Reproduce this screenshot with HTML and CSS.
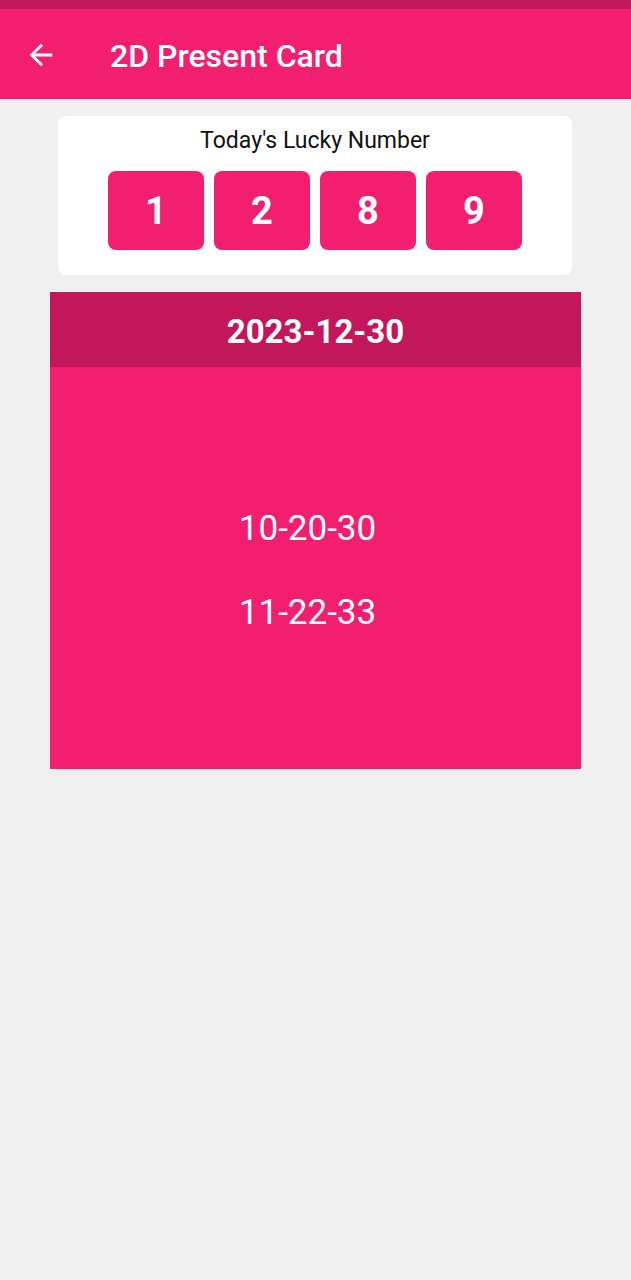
FILE: index.html
```html
<!DOCTYPE html>
<html>
<head>
<meta charset="utf-8">
<link rel="stylesheet" href="styles.css">
</head>
<body>
<div class="status"></div>
<header class="appbar">
  <svg class="back" width="34" height="34" viewBox="0 0 24 24"><path d="M20 11H7.83l5.59-5.59L12 4l-8 8 8 8 1.41-1.41L7.83 13H20v-2z" fill="#fff"/></svg>
  <h1 class="title">2D Present Card</h1>
</header>
<main class="content">
  <section class="lucky">
    <div class="lucky-title">Today's Lucky Number</div>
    <div class="digits">
      <div class="digit">1</div>
      <div class="digit">2</div>
      <div class="digit">8</div>
      <div class="digit">9</div>
    </div>
  </section>
  <section class="result">
    <div class="result-date">2023-12-30</div>
    <div class="result-body">
      <div class="num">10-20-30</div>
      <div class="num">11-22-33</div>
    </div>
  </section>
</main>
</body>
</html>
```
FILE: styles.css
```css
html, body { margin: 0; padding: 0; }
body {
  background: #f0f0f0;
  font-family: Roboto, "Liberation Sans", sans-serif;
  width: 631px;
  height: 1280px;
  overflow: hidden;
}
.status { height: 9px; background: #c2185b; }
.appbar {
  height: 90px;
  background: #f21f71;
  display: flex;
  align-items: center;
  padding-left: 24px;
  padding-top: 3px;
  box-sizing: border-box;
}
.back { display: block; margin-right: 52px; margin-top: -2px; }
.title {
  margin: 0;
  color: #fff;
  font-size: 32px;
  font-weight: 500;
  letter-spacing: 0;
}
.content { display: flex; flex-direction: column; align-items: center; padding-top: 17px; }
.lucky {
  width: 514px;
  margin-left: -1px;
  background: #fff;
  border-radius: 8px;
  display: flex;
  flex-direction: column;
  align-items: center;
  padding: 12px 0 25px;
  box-sizing: border-box;
  height: 159px;
}
.lucky-title { font-size: 23px; color: #111; line-height: 26px; }
.digits { display: flex; gap: 10px; margin-top: 17px; }
.digit {
  width: 96px;
  height: 79px;
  background: #f21f71;
  border-radius: 8px;
  color: #fff;
  font-size: 38px;
  font-weight: 700;
  display: flex;
  align-items: center;
  justify-content: center;
}
.result { width: 531px; margin-top: 17px; }
.result-date {
  height: 75px;
  background: #c2185b;
  color: #fff;
  font-size: 33px;
  font-weight: 700;
  display: flex;
  align-items: center;
  justify-content: center;
  padding-top: 3px;
  box-sizing: border-box;
}
.result-body {
  height: 402px;
  background: #f21f71;
  display: flex;
  flex-direction: column;
  align-items: center;
  justify-content: center;
  gap: 44px;
  padding-top: 6px;
  padding-right: 16px;
  box-sizing: border-box;
}
.num { color: #fff; font-size: 35px; line-height: 40px; }
```
